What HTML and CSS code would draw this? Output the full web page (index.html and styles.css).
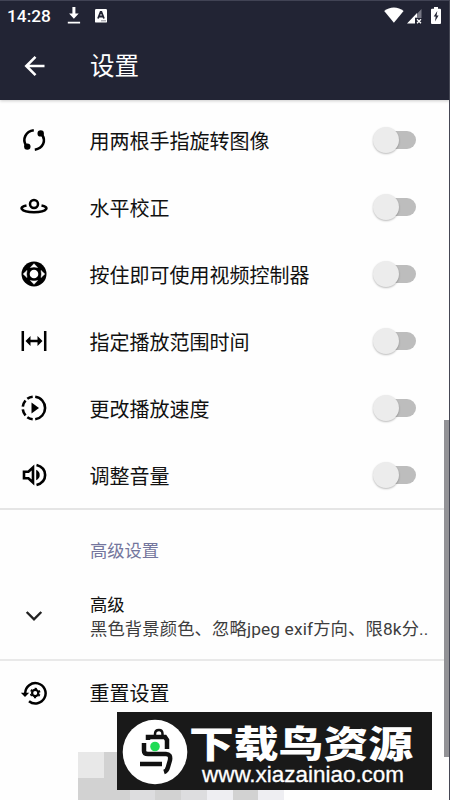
FILE: index.html
```html
<!DOCTYPE html>
<html lang="zh-CN">
<head>
<meta charset="utf-8">
<title>设置</title>
<link rel="stylesheet" href="styles.css">
</head>
<body>
<div class="screen">
  <header class="header">
    <div class="status">
      <span class="clock">14:28</span>
      <svg class="download" width="14" height="18" viewBox="0 0 14 18"><path d="M5.4 0h3v6.5h3.3L6.9 11.8 2.1 6.5h3.3zM.8 14.7h12.3v1.9H.8z" fill="#fff"/></svg>
      <svg class="badge" width="12" height="14" viewBox="0 0 12 14"><rect width="12" height="13.6" rx="1.2" fill="#fff"/><path d="M3 9.500 5.600 3h.8l2.600 6.500M4.2 7.500h3.600" fill="none" stroke="#222434" stroke-width="1.800"/><path d="M6 11.800h5" stroke="#8a8b95"/></svg>
      <div class="signals">
        <svg width="20" height="16" viewBox="0 0 20 16"><path d="M.2 4C5.5-.8 14.3-.8 19.6 4L9.9 15.7z" fill="#fff"/></svg>
        <svg class="cell" width="15" height="15" viewBox="0 0 15 15"><path d="M14.5 0v9H6z" fill="#777884"/><path d="M0 14.4 10 4v4.5H8v5.9z" fill="#fff"/><path d="m10 10.3 4 4m0-4-4 4" stroke="#fff" stroke-width="1.3"/></svg>
        <svg class="battery" width="10" height="18" viewBox="0 0 10 18"><path d="M3 0h4v1.7h2q1 0 1 1V16q0 1-1 1H1q-1 0-1-1V2.700q0-1 1-1h2z" fill="#fff"/><path d="M6.3 4 2.700 9.500h2L4 14.500l3.600-6h-2z" fill="#222434"/></svg>
      </div>
    </div>
    <div class="toolbar">
      <svg class="back" width="22" height="22" viewBox="0 0 22 22"><path d="M20.500 11H2.500M11.500 1.800 2.300 11l9.200 9.200" fill="none" stroke="#fff" stroke-width="2.600"/></svg>
      <h1>设置</h1>
    </div>
  </header>

  <main>
    <section class="options">
      <div class="row">
        <svg class="icon" viewBox="-14 -14 28 28"><path d="M-.2-9.700C-8.500-8.500-11.800-1-8 5.500M.8 9.700C9.100 8.500 12.200 1 8-5.500" fill="none" stroke="#000" stroke-width="2.600"/><circle cx="6.700" cy="-6.600" r="3.200"/><circle cx="-6.700" cy="6.600" r="3.200"/></svg>
        <span class="label">用两根手指旋转图像</span><i class="switch"></i>
      </div>
      <div class="row">
        <svg class="icon" viewBox="-14 -14 28 28"><circle cy="-3" r="4" fill="none" stroke="#000" stroke-width="2.500"/><path d="M-7.500-1.600C-11.500-.8-13 .5-12.200 2-9 6.300 9 6.300 12.200 2 13 .5 11.500-.8 7.500-1.600" fill="none" stroke="#000" stroke-width="2.500"/></svg>
        <span class="label">水平校正</span><i class="switch"></i>
      </div>
      <div class="row">
        <svg class="icon" viewBox="-14 -14 28 28"><circle r="12.500"/><circle r="4.300" fill="#fff"/><path d="m0-10.300 3.600 3.800Q0-7.500-3.600-6.500zM0 10.300l3.600-3.800Q0 7.500-3.600 6.500zM-10.800 0l3.800-3.600Q-8 0-7 3.600zM10.800 0 7-3.600Q8 0 7 3.600z" fill="#fff" stroke="#fff" stroke-width=".5"/></svg>
        <span class="label">按住即可使用视频控制器</span><i class="switch"></i>
      </div>
      <div class="row">
        <svg class="icon" viewBox="-14 -14 28 28"><path d="M-11.200-10v20M11.200-10v20M-6 0H6" stroke="#000" stroke-width="2.500"/><path d="m-8.500 0 5-5V5zM8.500 0l-5-5V5z"/></svg>
        <span class="label">指定播放范围时间</span><i class="switch"></i>
      </div>
      <div class="row">
        <svg class="icon" viewBox="-14 -14 28 28"><path d="M1.200-11.300A11.400 11.400 0 0 1 1.200 11.300M-1.300-11.300Q-4.300-11-6.700-9.200M-8.500-7.500Q-10.800-4.700-11.200-1.400M-11.200 1.400Q-10.800 4.700-8.500 7.500M-6.700 9.200Q-4.300 11-1.300 11.300" fill="none" stroke="#000" stroke-width="2.600"/><path d="M-2.500-5.500 5 0l-7.500 5.500z"/></svg>
        <span class="label">更改播放速度</span><i class="switch"></i>
      </div>
      <div class="row">
        <svg class="icon" viewBox="-14 -14 28 28"><path d="M-10-3.200h4.400L-1-7.500v15l-4.600-4.300H-10zM2.500-10C14-6.800 14 6.800 2.500 10" fill="none" stroke="#000" stroke-width="2.600"/><path d="M2.200-5.200q3.500 1.700 3.500 5.200T2.200 5.200z"/></svg>
        <span class="label">调整音量</span><i class="switch"></i>
      </div>
    </section>

    <section class="advanced">
      <h2>高级设置</h2>
      <div class="summary">
        <svg class="icon" viewBox="-14 -14 28 28"><path d="M-7.300-4 0 3.400 7.300-4" fill="none" stroke="#222" stroke-width="2.400"/></svg>
        <div class="summary-text">
          <div class="title">高级</div>
          <div class="detail">黑色背景颜色、忽略jpeg exif方向、限8k分..</div>
        </div>
      </div>
    </section>

    <div class="row reset">
      <svg class="icon" viewBox="-14 -14 28 28"><path d="M-8.800 0A10.200 10.200 0 1 1-5 8.200" fill="none" stroke="#000" stroke-width="2.500"/><path d="M-13.200-.3h8.400L-9 4z"/><circle cx="1.200" r="3.100" fill="none" stroke="#000" stroke-width="2.200"/><circle cx="1.200" r="4.600" fill="none" stroke="#000" stroke-width="1.500" stroke-dasharray="2.200 2.617" stroke-dashoffset="-1.300"/></svg>
      <span class="label">重置设置</span>
    </div>
  </main>

  <div class="mosaic"><b class="a"></b><b class="b"></b><b></b><b></b><b></b><b></b><b></b><b></b><b class="b"></b><b class="b"></b><b class="c"></b><b class="b"></b><b class="c"></b><b class="d"></b><b class="b"></b><b class="d"></b></div>

  <div class="watermark">
    <svg class="logo" width="66" height="66" viewBox="0 0 66 66"><circle cx="33" cy="33" r="32.300" fill="#fff"/><g fill="none" stroke="#111" stroke-width="4.500"><path d="M33 17v-2q0-4 4-4 3.500 0 3.500 4v3" stroke-width="2.500"/><path d="M26 21v-3h17l2 3v9M22 24v8q0 3 4 3h18q5 0 4 6l-2 7q-1 4-4 5M18 45h22"/></g><circle cx="33" cy="27.500" r="4.800" fill="#20dc55"/></svg>
    <div class="brand">
      <svg class="brand-name" width="226" height="39" viewBox="0 0 226 39"><text x="0" y="33" textLength="224" lengthAdjust="spacingAndGlyphs">下载鸟资源</text></svg>
      <svg class="brand-url" width="206" height="22" viewBox="0 0 206 22"><text x="0" y="17" textLength="202" lengthAdjust="spacingAndGlyphs">www.xiazainiao.com</text></svg>
    </div>
  </div>
  <div class="edge"></div>
  <div class="scrollbar"></div>
</div>
</body>
</html>
```
FILE: styles.css
```css
* { box-sizing: border-box; }
body { margin: 0; font-family: Roboto, "Noto Sans CJK SC", sans-serif; color: #111; }
.screen { position: relative; width: 450px; height: 800px; overflow: hidden; background: #fefefe; }
svg { display: block; flex: none; }

.header { height: 100px; background: #222434; border-top: 1px solid #414354; color: #fff; box-shadow: 0 1px 3px #0003; }
.status { display: flex; height: 31px; padding: 6px 9px 0 7px; }
.clock { width: 60px; font-size: 17.3px; line-height: 19px; font-weight: 500; }
.badge { margin: 2px 0 0 14px; }
.signals { display: flex; margin-left: auto; }
.cell { margin: 2px 0 0 3px; }
.battery { margin-left: 9px; }
.toolbar { display: flex; align-items: center; height: 67px; padding: 0 24px; }
.back { margin-right: 44px; }
h1 { margin: 0; padding-top: 3px; font-size: 24.5px; font-weight: 400; line-height: 36px; }

.options { padding-top: 6px; border-bottom: 2px solid #e5e5e5; height: 410px; }
.row { display: flex; align-items: center; height: 67px; padding: 0 34px 0 20px; }
.icon { width: 28px; height: 28px; }
.label { margin-left: 41.5px; padding-top: 4px; font-size: 20px; line-height: 30px; white-space: nowrap; }
.switch { position: relative; width: 38px; height: 18px; margin-left: auto; border-radius: 9px; background: #bdbdbd; }
.switch::after { content: ""; position: absolute; left: -5px; top: -4px; width: 26px; height: 26px; border-radius: 50%; background: #ececec; box-shadow: 0 1px 2px #0004; }

.advanced { height: 151px; padding-top: 28px; border-bottom: 2px solid #e9e9e9; }
h2 { margin: 0 0 0 90px; font-size: 17.3px; line-height: 26px; font-weight: 400; color: #74769d; }
.summary { display: flex; align-items: center; margin-top: 27px; padding-left: 20px; height: 50px; }
.summary-text { margin-left: 42px; padding-top: 1px; white-space: nowrap; }
.title { font-size: 17.3px; line-height: 24px; }
.detail { font-size: 17.3px; line-height: 24px; letter-spacing: .15px; color: #3d3d3d; }
.reset { height: 64px; }
.reset .label { padding-top: 2px; }

.mosaic { position: absolute; left: 78px; top: 752px; width: 206px; height: 52px; display: grid; grid-template-columns: repeat(8, 1fr); }
.a { background: #e8e8e8; }
.b { background: #d2d2d2; }
.c { background: #dddddf; }
.d { background: #eeeef2; }

.watermark { position: absolute; left: 117px; top: 712px; width: 315px; height: 78px; background: #191919; display: flex; padding: 7px 0 0 5px; }
.watermark svg { overflow: visible; }
.brand-name { margin: 6px 0 0 1px; }
.brand-name text { font: 900 37px "Noto Sans CJK SC", sans-serif; fill: #fff; }
.brand-url { margin: 1px 0 0 14px; }
.brand-url text { font: 21.5px "Liberation Sans", sans-serif; fill: #fff; stroke: #fff; stroke-width: .3px; }
.edge { position: absolute; right: 0; top: 0; width: 1px; height: 100%; background: #454754; }
.scrollbar { position: absolute; right: 1px; top: 420px; width: 5px; height: 337px; background: #929296; }
```
